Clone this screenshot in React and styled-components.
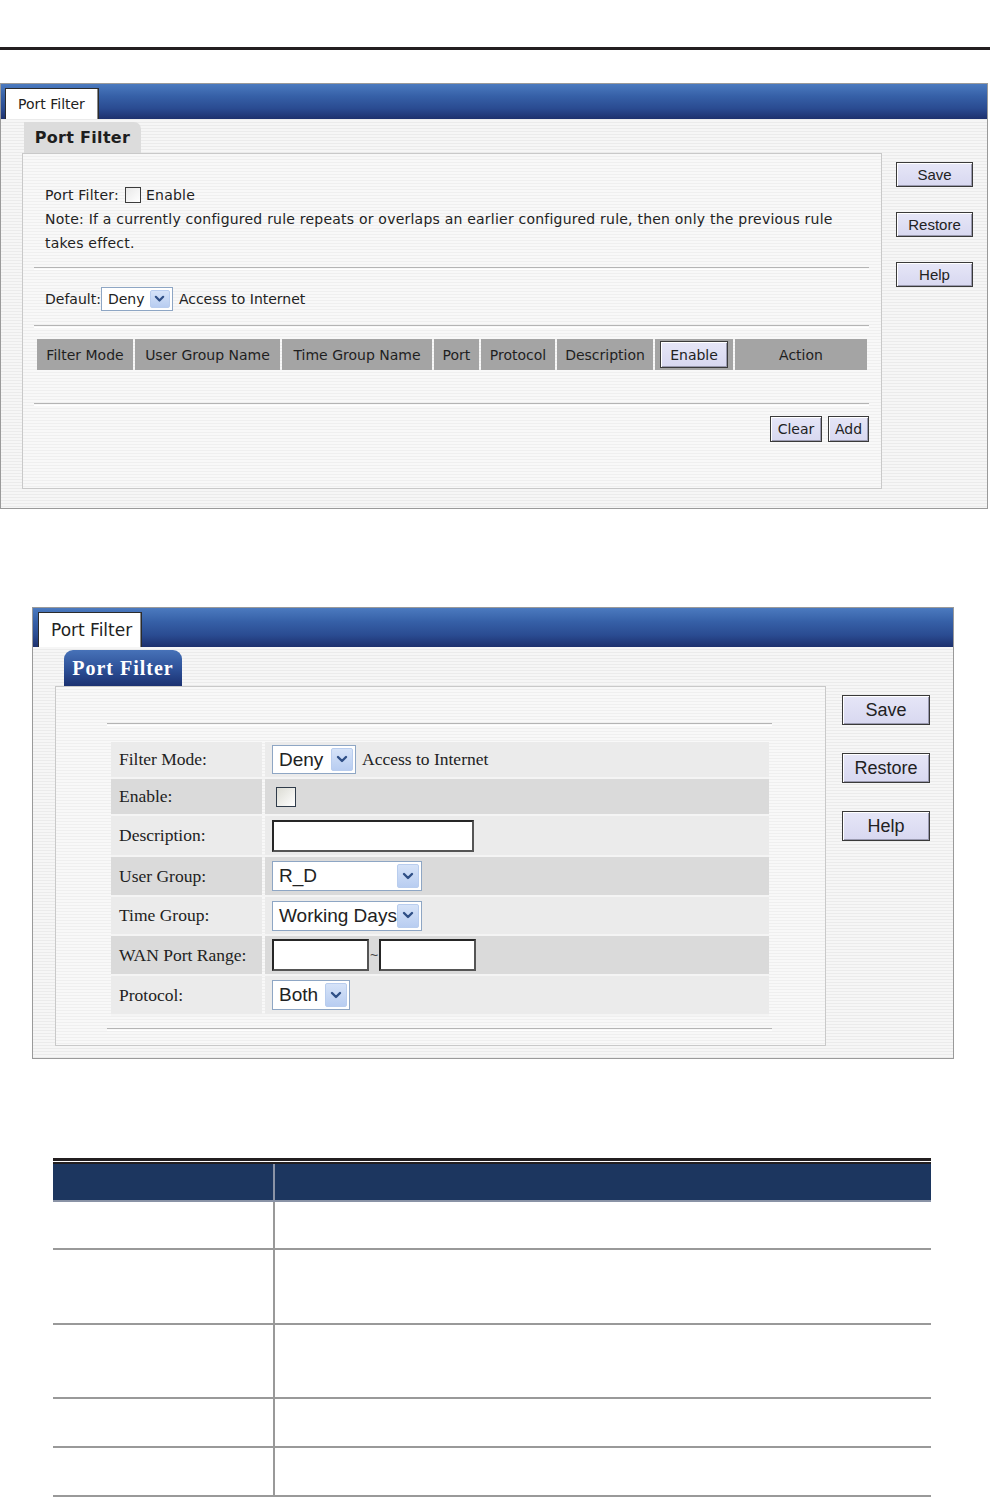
import styled, { createGlobalStyle } from "styled-components";

const GlobalStyle = createGlobalStyle`
  body {
    margin: 0;
    background: #ffffff;
  }
`;

const STRIPES = `repeating-linear-gradient(180deg, #f6f6f6 0px, #f6f6f6 2px, #ebebeb 2px, #ebebeb 3px)`;
const SOFT_STRIPES = `repeating-linear-gradient(180deg, #f8f8f8 0px, #f8f8f8 2px, #efefef 2px, #efefef 3px)`;

const Page = styled.div`
  width: 990px;
  min-height: 1497px;
  display: flex;
  flex-direction: column;
  font-family: "DejaVu Sans", Verdana, sans-serif;
  color: #222;
  & > * {
    flex-shrink: 0;
  }
`;

const TopRule = styled.div`
  margin-top: 47px;
  height: 3px;
  background: #231f20;
`;

// 패널 틀
const Frame = styled.div`
  box-sizing: border-box;
  margin-top: ${p => p.top}px;
  margin-left: ${p => p.left}px;
  width: ${p => p.w}px;
  height: ${p => p.h}px;
  border: 1px solid #9a9a9a;
  background: ${STRIPES};
  display: flex;
  flex-direction: column;
`;

const TopBar = styled.div`
  height: ${p => p.h}px;
  flex-shrink: 0;
  display: flex;
  align-items: flex-end;
  padding-left: ${p => p.pad}px;
  background: linear-gradient(180deg, #4b7abf 0%, #3660a7 35%, #2a4b91 70%, #1d306d 100%);
`;

const Tab = styled.div`
  box-sizing: border-box;
  width: ${p => p.w}px;
  height: ${p => p.h}px;
  background: #fff;
  border: 1px solid #2b2b2b;
  border-bottom: none;
  box-shadow: inset -1px 0 0 #8a8a8a;
  display: flex;
  align-items: center;
  padding-left: ${p => p.pad}px;
  font-size: ${p => p.fs}px;
  color: #222;
`;

const Body = styled.div`
  display: flex;
  padding: 3px 0 0 ${p => p.pad}px;
  gap: ${p => p.gap}px;
`;

const Column = styled.div`
  display: flex;
  flex-direction: column;
  width: ${p => p.w}px;
`;

const SubTab = styled.div`
  box-sizing: border-box;
  margin-left: ${p => p.left}px;
  width: ${p => p.w}px;
  height: ${p => p.h}px;
  display: flex;
  align-items: center;
  justify-content: center;
  font-weight: bold;
  ${p => p.blue ? `
    background: linear-gradient(180deg, #4772b8 0%, #2c4f96 55%, #1b3171 100%);
    border-radius: 9px 9px 0 0;
    color: #fff;
    font-family: "Liberation Serif", "Times New Roman", serif;
    font-size: 20px;
    letter-spacing: 1px;
  ` : `
    background: #dcdcdc;
    border-radius: 0 7px 0 0;
    color: #1e1e1e;
    font-size: 16px;
    letter-spacing: 0.3px;
  `}
`;

const InnerBox = styled.div`
  box-sizing: border-box;
  height: ${p => p.h}px;
  border: 1px solid #c9c9c9;
  background: ${SOFT_STRIPES};
  display: flex;
  flex-direction: column;
`;

const ButtonColumn = styled.div`
  display: flex;
  flex-direction: column;
  margin-top: ${p => p.top}px;
  gap: ${p => p.gap}px;
`;

const XpButton = styled.div`
  box-sizing: border-box;
  width: ${p => p.w}px;
  height: ${p => p.h}px;
  background: linear-gradient(180deg, #e6e6f7 0%, #d8d8f0 100%);
  border: 1px solid #3a3a3a;
  box-shadow: inset 1px 1px 0 #ffffff, inset -1px -1px 0 #9a9ab0;
  display: flex;
  align-items: center;
  justify-content: center;
  font-family: ${p => p.tahoma ? `"DejaVu Sans", Verdana, sans-serif` : `"Liberation Sans", Arial, sans-serif`};
  font-size: ${p => p.fs}px;
  color: #222;
`;

const Separator = styled.div`
  margin: ${p => p.top}px ${p => p.right}px 0 ${p => p.left}px;
  height: 1px;
  border-top: 1px solid #b4b4b4;
  border-bottom: 1px solid #ffffff;
`;

// 첫 번째 화면
const NoteBlock = styled.div`
  padding: 29px 22px 0 22px;
  font-size: 14px;
  line-height: 24px;
  letter-spacing: 0.22px;
  color: #222;
`;

const Line = styled.div`
  display: flex;
  align-items: center;
  white-space: nowrap;
`;

const SmallCheck = styled.span`
  box-sizing: border-box;
  display: inline-block;
  width: 16px;
  height: 16px;
  border: 1px solid #3c3c3c;
  background: linear-gradient(135deg, #e8e8e8, #ffffff);
  margin: 0 5px 0 6px;
`;

const DefaultRow = styled.div`
  margin: 17px 0 0 22px;
  height: 24px;
  display: flex;
  align-items: center;
  font-size: 14px;
  white-space: nowrap;
`;

const HeaderRow = styled.div`
  margin: 11px 0 0 14px;
  width: 830px;
  height: 31px;
  display: flex;
  gap: 2px;
`;

const HeaderCell = styled.div`
  box-sizing: border-box;
  width: ${p => p.w}px;
  height: 100%;
  background: #a4a4a4;
  display: flex;
  align-items: center;
  justify-content: center;
  font-size: 14px;
  color: #1f1f1f;
  white-space: nowrap;
`;

const ActionRow = styled.div`
  margin: 10px 12px 0 0;
  display: flex;
  justify-content: flex-end;
  gap: 6px;
`;

// 두 번째 화면
const Form = styled.div`
  margin: 16px 0 0 55px;
  width: 658px;
  display: flex;
  flex-direction: column;
`;

const FormRow = styled.div`
  box-sizing: border-box;
  height: ${p => p.h}px;
  display: flex;
  gap: 3px;
  border-bottom: 2px solid #f4f4f4;
`;

const LabelCell = styled.div`
  width: 151px;
  flex-shrink: 0;
  display: flex;
  align-items: center;
  padding-left: 8px;
  box-sizing: border-box;
  background: ${p => p.dark ? "#dadada" : "#ebebeb"};
  font-family: "Liberation Serif", "Times New Roman", serif;
  font-size: 17.5px;
  color: #222;
  white-space: nowrap;
`;

const ValueCell = styled.div`
  flex: 1;
  display: flex;
  align-items: center;
  padding-left: 7px;
  background: ${p => p.dark ? "#dadada" : "#ebebeb"};
  font-family: "Liberation Serif", "Times New Roman", serif;
  font-size: 17.5px;
  color: #222;
  white-space: nowrap;
`;

const SelectBox = styled.div`
  box-sizing: border-box;
  width: ${p => p.w}px;
  height: ${p => p.h}px;
  border: 1px solid #8ea6c4;
  background: #fff;
  display: flex;
  align-items: center;
  padding: 2px;
`;

const SelectText = styled.span`
  flex: 1;
  overflow: hidden;
  white-space: nowrap;
  padding-left: 4px;
  font-family: ${p => p.tahoma ? `"DejaVu Sans", Verdana, sans-serif` : `"Liberation Sans", Arial, sans-serif`};
  font-size: ${p => p.fs}px;
  color: #222;
`;

const ArrowBtn = styled.span`
  box-sizing: border-box;
  width: ${p => p.w}px;
  height: 100%;
  flex-shrink: 0;
  border-radius: 2px;
  border: 1px solid #b9cdee;
  background: linear-gradient(180deg, #d6e3f8 0%, #b8cdf1 100%);
  display: flex;
  align-items: center;
  justify-content: center;
`;

const BigCheck = styled.span`
  box-sizing: border-box;
  width: 20px;
  height: 20px;
  margin-left: 4px;
  border: 1px solid #2f3b4a;
  background: linear-gradient(135deg, #dcdcd4, #ffffff);
`;

const TextInput = styled.span`
  box-sizing: border-box;
  width: ${p => p.w}px;
  height: 32px;
  border: 2px solid #262626;
  border-right-color: #555;
  border-bottom-color: #555;
  background: #fff;
`;

const Tilde = styled.span`
  width: 10px;
  text-align: center;
  font-family: "Liberation Sans", Arial, sans-serif;
  font-size: 14px;
  color: #444;
`;

const Follow = styled.span`
  margin-left: 6px;
`;

// 설명 표
const DocTable = styled.div`
  margin: 99px 0 0 53px;
  width: 878px;
  display: flex;
  flex-direction: column;
`;

const DocRule = styled.div`
  height: 3px;
  background: #231f20;
  border-bottom: 1px solid #fff;
`;

const DocThin = styled.div`
  height: 2px;
  background: #231f20;
`;

const DocRow = styled.div`
  box-sizing: border-box;
  height: ${p => p.h}px;
  display: grid;
  grid-template-columns: 222px 1fr;
  background: ${p => p.head ? "#1c365f" : "#ffffff"};
  border-bottom: 2px solid ${p => p.head ? "#8a93a6" : "#999999"};
`;

const DocCell = styled.div`
  border-right: ${p => p.first ? `2px solid ${p.head ? "#8a93a6" : "#999999"}` : "none"};
`;

const Chevron = ({ size = 12 }) => (
  <svg width={size} height={size * 0.75} viewBox="0 0 12 9">
    <polyline points="2,2 6,6 10,2" fill="none" stroke="#2f4f86" strokeWidth="2.4" strokeLinecap="round" strokeLinejoin="round" />
  </svg>
);

function Select({ w, h, value, fs, arrow, tahoma, chev }) {
  return (
    <SelectBox w={w} h={h}>
      <SelectText fs={fs} tahoma={tahoma}>{value}</SelectText>
      <ArrowBtn w={arrow}><Chevron size={chev} /></ArrowBtn>
    </SelectBox>
  );
}

const headerCols = [
  { label: "Filter Mode", w: 96 },
  { label: "User Group Name", w: 145 },
  { label: "Time Group Name", w: 150 },
  { label: "Port", w: 45 },
  { label: "Protocol", w: 74 },
  { label: "Description", w: 96 },
  { label: "Enable", w: 78, button: true },
  { label: "Action", w: 132 },
];

const docRows = [48, 75, 74, 49, 49];

function App() {
  return (
    <Page>
      <GlobalStyle />
      <TopRule />

      {/* 첫 번째 스크린샷: 목록 */}
      <Frame top={33} left={0} w={988} h={426}>
        <TopBar h={35} pad={4}>
          <Tab w={94} h={31} pad={12} fs={14}>Port Filter</Tab>
        </TopBar>
        <Body pad={21} gap={14}>
          <Column w={860}>
            <SubTab left={2} w={117} h={31}>Port Filter</SubTab>
            <InnerBox h={336}>
              <NoteBlock>
                <Line>Port Filter:<SmallCheck />Enable</Line>
                <Line>Note: If a currently configured rule repeats or overlaps an earlier configured rule, then only the previous rule</Line>
                <Line>takes effect.</Line>
              </NoteBlock>
              <Separator top={12} left={11} right={12} />
              <DefaultRow>
                Default:
                <Select w={72} h={24} value="Deny" fs={14} arrow={20} tahoma chev={11} />
                <Follow>Access to Internet</Follow>
              </DefaultRow>
              <Separator top={14} left={11} right={12} />
              <HeaderRow>
                {headerCols.map(col => (
                  <HeaderCell key={col.label} w={col.w}>
                    {col.button
                      ? <XpButton w={68} h={27} fs={14} tahoma>{col.label}</XpButton>
                      : col.label}
                  </HeaderCell>
                ))}
              </HeaderRow>
              <Separator top={33} left={11} right={12} />
              <ActionRow>
                <XpButton w={52} h={26} fs={14} tahoma>Clear</XpButton>
                <XpButton w={41} h={26} fs={14} tahoma>Add</XpButton>
              </ActionRow>
            </InnerBox>
          </Column>
          <ButtonColumn top={40} gap={25}>
            <XpButton w={77} h={25} fs={15}>Save</XpButton>
            <XpButton w={77} h={25} fs={15}>Restore</XpButton>
            <XpButton w={77} h={25} fs={15}>Help</XpButton>
          </ButtonColumn>
        </Body>
      </Frame>

      {/* 두 번째 스크린샷: 규칙 추가 */}
      <Frame top={98} left={32} w={922} h={452}>
        <TopBar h={39} pad={5}>
          <Tab w={104} h={35} pad={12} fs={17}>Port Filter</Tab>
        </TopBar>
        <Body pad={22} gap={16}>
          <Column w={771}>
            <SubTab blue left={9} w={118} h={36}>Port Filter</SubTab>
            <InnerBox h={360}>
              <Separator top={36} left={51} right={53} />
              <Form>
                <FormRow h={37}>
                  <LabelCell>Filter Mode:</LabelCell>
                  <ValueCell>
                    <Select w={84} h={29} value="Deny" fs={19} arrow={22} chev={12} />
                    <Follow>Access to Internet</Follow>
                  </ValueCell>
                </FormRow>
                <FormRow h={37}>
                  <LabelCell dark>Enable:</LabelCell>
                  <ValueCell dark><BigCheck /></ValueCell>
                </FormRow>
                <FormRow h={41}>
                  <LabelCell>Description:</LabelCell>
                  <ValueCell><TextInput w={202} /></ValueCell>
                </FormRow>
                <FormRow h={40}>
                  <LabelCell dark>User Group:</LabelCell>
                  <ValueCell dark>
                    <Select w={150} h={30} value="R_D" fs={19} arrow={22} chev={12} />
                  </ValueCell>
                </FormRow>
                <FormRow h={39}>
                  <LabelCell>Time Group:</LabelCell>
                  <ValueCell>
                    <Select w={150} h={30} value="Working Days" fs={19} arrow={22} chev={12} />
                  </ValueCell>
                </FormRow>
                <FormRow h={40}>
                  <LabelCell dark>WAN Port Range:</LabelCell>
                  <ValueCell dark>
                    <TextInput w={97} />
                    <Tilde>~</Tilde>
                    <TextInput w={97} />
                  </ValueCell>
                </FormRow>
                <FormRow h={40}>
                  <LabelCell>Protocol:</LabelCell>
                  <ValueCell>
                    <Select w={78} h={30} value="Both" fs={19} arrow={22} chev={12} />
                  </ValueCell>
                </FormRow>
              </Form>
              <Separator top={12} left={51} right={53} />
            </InnerBox>
          </Column>
          <ButtonColumn top={45} gap={28}>
            <XpButton w={88} h={30} fs={18}>Save</XpButton>
            <XpButton w={88} h={30} fs={18}>Restore</XpButton>
            <XpButton w={88} h={30} fs={18}>Help</XpButton>
          </ButtonColumn>
        </Body>
      </Frame>

      {/* 설명 표 */}
      <DocTable>
        <DocRule />
        <DocThin />
        <DocRow head h={38}>
          <DocCell head first />
          <DocCell head />
        </DocRow>
        {docRows.map((h, i) => (
          <DocRow key={i} h={h}>
            <DocCell first />
            <DocCell />
          </DocRow>
        ))}
      </DocTable>
    </Page>
  );
}

export default App;
